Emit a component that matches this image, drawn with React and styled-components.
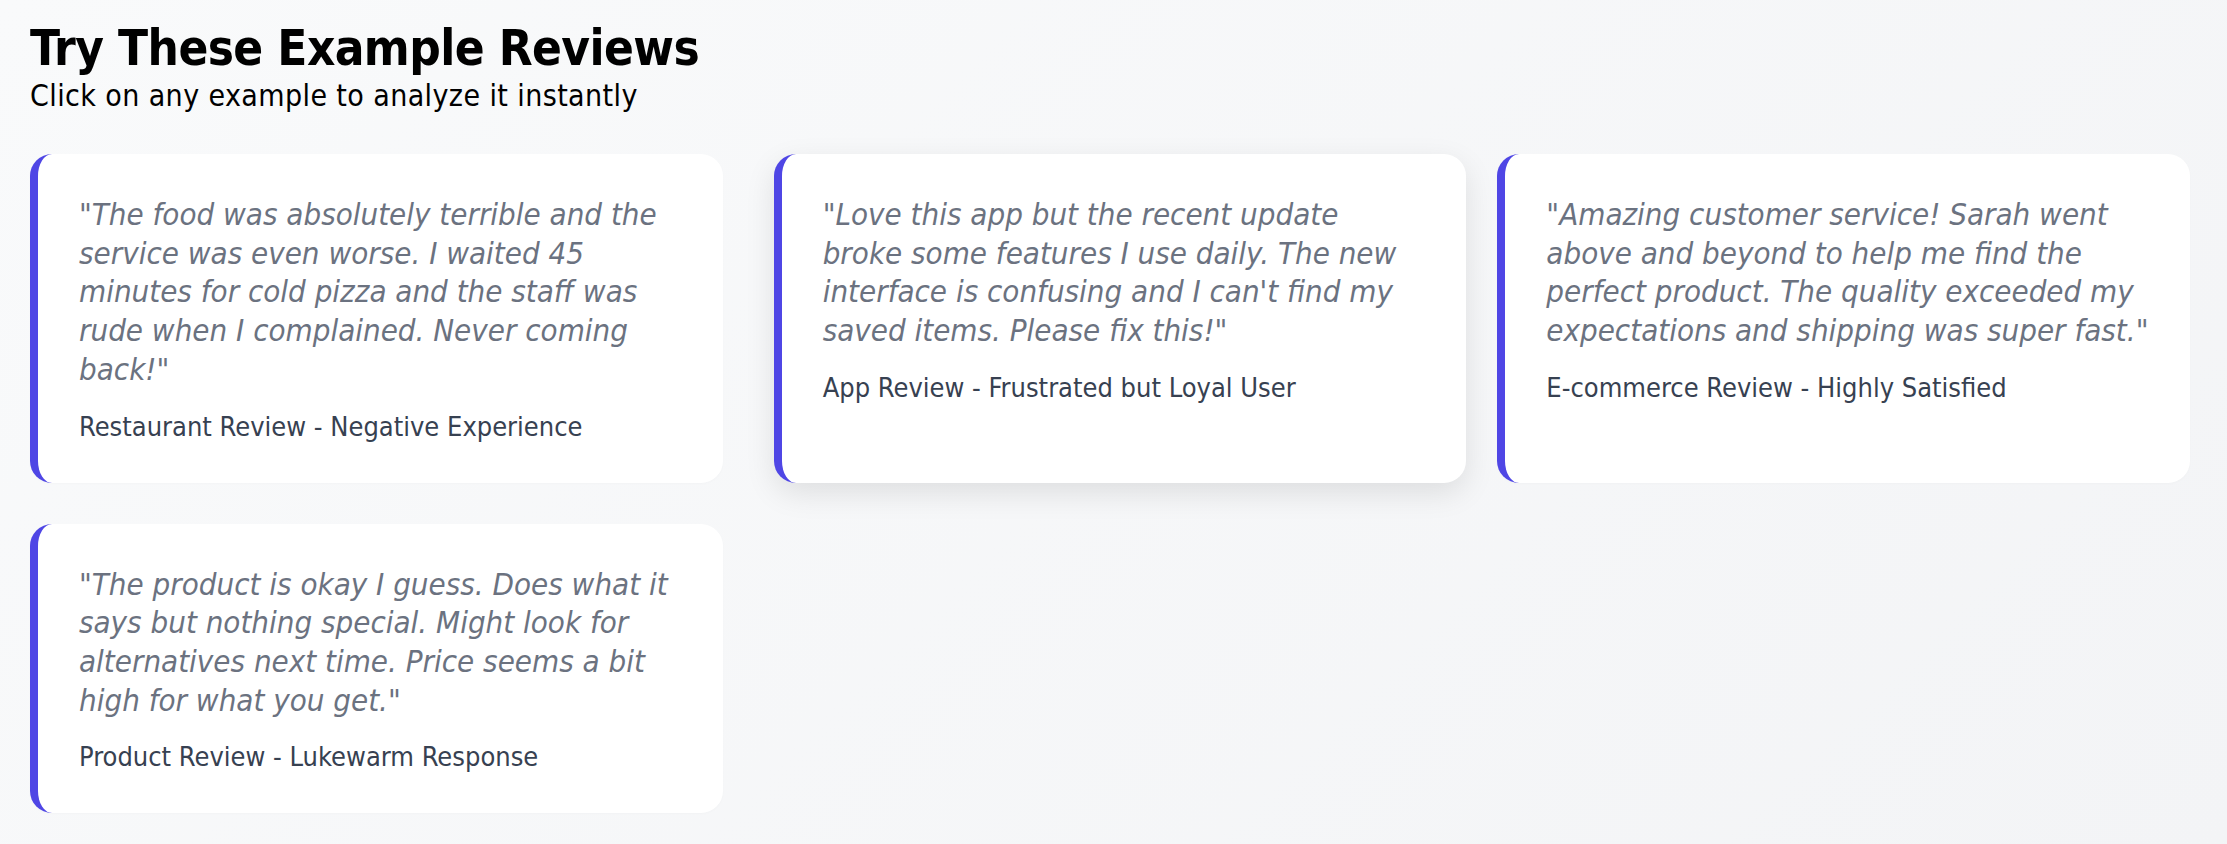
import styled, { createGlobalStyle } from "styled-components";

const GlobalStyle = createGlobalStyle`
  html, body {
    margin: 0;
    padding: 0;
  }
  body {
    min-height: 100vh;
    background: linear-gradient(135deg, #f9fafb 0%, #f3f4f6 100%);
    font-family: "DejaVu Sans Condensed", "DejaVu Sans", sans-serif;
  }
`;

const Page = styled.div`
  padding: 20px 37px 30px 30px;
`;

const Header = styled.div`
  margin-bottom: 41px;
`;

const Title = styled.h2`
  margin: 0;
  font-size: 49px;
  font-weight: bold;
  letter-spacing: -0.6px;
  color: #000;
  line-height: 58px;
`;

const Subtitle = styled.p`
  margin: 0;
  font-size: 30px;
  letter-spacing: 0.4px;
  color: #000;
  line-height: 35px;
`;

const Grid = styled.div`
  display: grid;
  grid-template-columns: repeat(3, 1fr);
  gap: 41px;
`;

const Card = styled.div`
  background: #fff;
  border-radius: 22px;
  border-left: 8px solid #4f46e5;
  padding: 41px;
  cursor: pointer;
  box-shadow: ${(p) =>
    p.$hover ? "0 10px 30px rgba(0, 0, 0, 0.1)" : "0 1px 3px rgba(0, 0, 0, 0.02)"};
  transform: ${(p) => (p.$hover ? "translateX(10px)" : "none")};
`;

const Quote = styled.p`
  margin: 0;
  font-size: 31px;
  line-height: 38.7px;
  font-style: italic;
  color: #6b7280;
`;

const Label = styled.div`
  margin-top: 22px;
  font-size: 27px;
  line-height: 31px;
  color: #374151;
`;

const examples = [
  {
    text: "\"The food was absolutely terrible and the service was even worse. I waited 45 minutes for cold pizza and the staff was rude when I complained. Never coming back!\"",
    label: "Restaurant Review - Negative Experience",
  },
  {
    text: "\"Love this app but the recent update broke some features I use daily. The new interface is confusing and I can't find my saved items. Please fix this!\"",
    label: "App Review - Frustrated but Loyal User",
    hover: true,
  },
  {
    text: "\"Amazing customer service! Sarah went above and beyond to help me find the perfect product. The quality exceeded my expectations and shipping was super fast.\"",
    label: "E-commerce Review - Highly Satisfied",
  },
  {
    text: "\"The product is okay I guess. Does what it says but nothing special. Might look for alternatives next time. Price seems a bit high for what you get.\"",
    label: "Product Review - Lukewarm Response",
  },
];

export default function App() {
  return (
    <>
      <GlobalStyle />
      <Page>
        <Header>
          <Title>Try These Example Reviews</Title>
          <Subtitle>Click on any example to analyze it instantly</Subtitle>
        </Header>
        <Grid>
          {examples.map((ex) => (
            <Card key={ex.label} $hover={ex.hover}>
              <Quote>{ex.text}</Quote>
              <Label>{ex.label}</Label>
            </Card>
          ))}
        </Grid>
      </Page>
    </>
  );
}
